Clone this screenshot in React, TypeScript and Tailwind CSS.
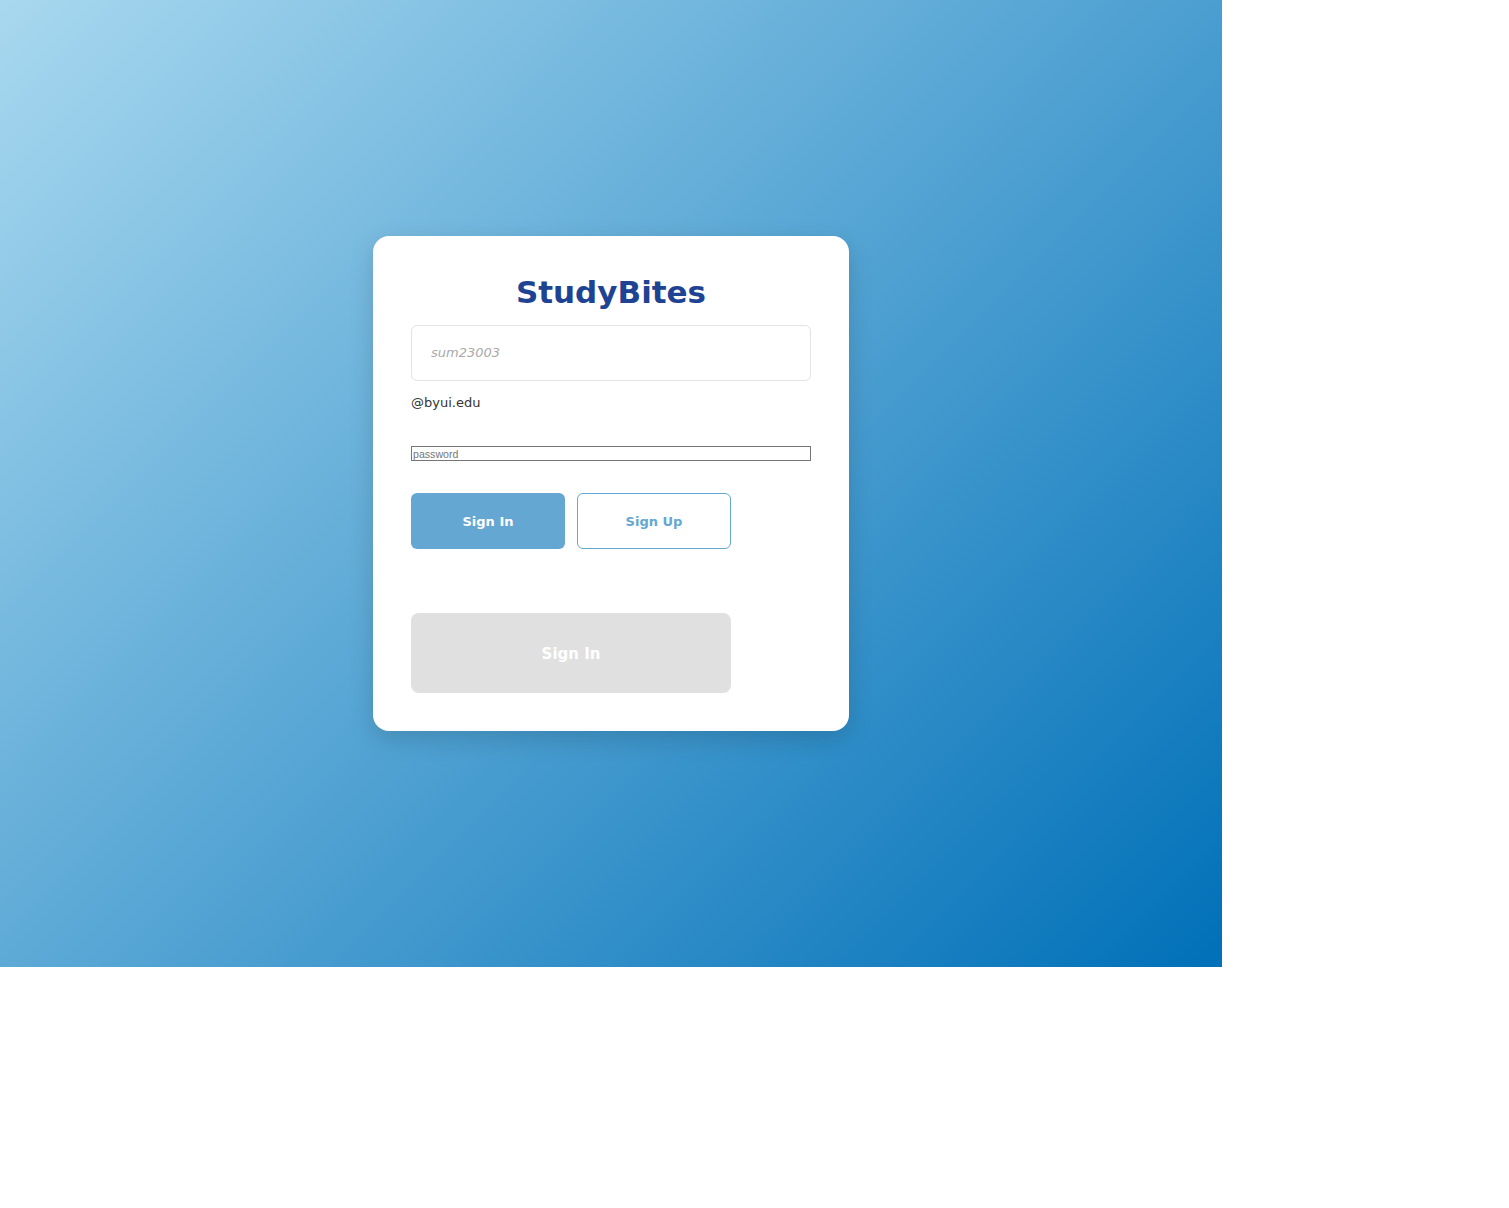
import { useState } from "react";

export default function App() {
  const [user, setUser] = useState("");
  const [password, setPassword] = useState("");

  return (
    <div className="w-[1222px] h-[967px] flex items-center justify-center bg-[linear-gradient(135deg,#a8d8ef,#0070b8)] font-['DejaVu_Sans',sans-serif]">
      <div className="w-[476px] bg-white rounded-[16px] shadow-[0_8px_24px_rgba(0,0,0,0.15)] p-[38px] flex flex-col">
        <h1 className="text-[31px] leading-[37px] font-bold text-[#1f4393] text-center mb-[14px]">
          StudyBites
        </h1>

        <input
          value={user}
          onChange={(e) => setUser(e.target.value)}
          placeholder="sum23003"
          className="h-[56px] w-full border border-[#e2e4e8] rounded-[6px] pl-[19px] pr-[20px] pb-[1px] text-[13px] text-[#333] placeholder:italic placeholder:text-[#aaa] outline-none"
        />
        <p className="mt-[14px] mb-[-1px] text-[13px] leading-[15px] text-[#333]">@byui.edu</p>

        <input
          type="password"
          value={password}
          onChange={(e) => setPassword(e.target.value)}
          placeholder="password"
          className="mt-[37px] h-[15px] w-full border border-[#767676] px-[1px] text-[10.6px] leading-[13px] font-['Liberation_Sans',Arial,sans-serif] placeholder:text-[#767676]"
        />

        <div className="mt-[32px] flex gap-[12px]">
          <button className="w-[154px] h-[56px] rounded-[6px] bg-[#64a7d3] text-white text-[13px] font-bold pt-[2px]">
            Sign In
          </button>
          <button className="w-[154px] h-[56px] rounded-[6px] bg-white border border-[#64a7d3] text-[#64a7d3] text-[13px] font-bold pt-[2px]">
            Sign Up
          </button>
        </div>

        <button
          disabled
          className="mt-[64px] w-[320px] h-[80px] rounded-[8px] bg-[#e0e0e0] text-white text-[15px] font-bold pt-[2px]"
        >
          Sign In
        </button>
      </div>
    </div>
  );
}
